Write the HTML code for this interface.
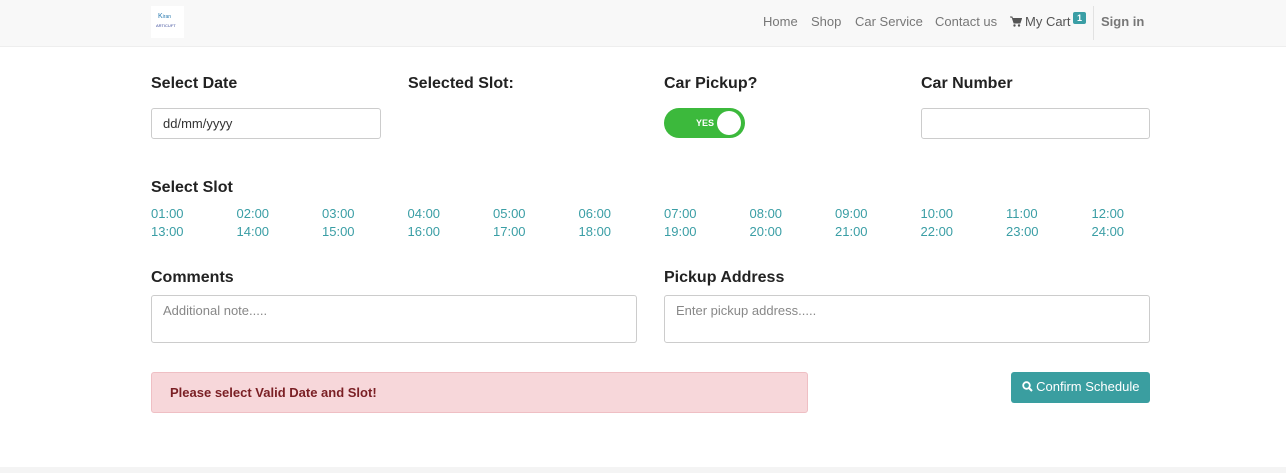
<!DOCTYPE html>
<html><head><style>
body{margin:0;width:1286px;height:473px;background:#fff;font-family:"Liberation Sans",sans-serif;position:relative;overflow:hidden;color:#333}
.nav{position:absolute;left:0;top:0;width:1286px;height:46px;background:#f8f8f8;border-bottom:1px solid #eee}
.logo{position:absolute;left:151px;top:6px;width:33px;height:32px;background:#fff}
.nav a{position:absolute;top:14px;font-size:13px;color:#777;text-decoration:none}
.h{position:absolute;font-size:16px;font-weight:bold;color:#222}
.in{position:absolute;border:1px solid #ccc;border-radius:3px;box-sizing:border-box;font-size:13px;color:#555;padding:7px 11px;background:#fff}
.s{position:absolute;font-size:13px;color:#3a9ea5}
</style></head><body>
<div class="nav">
<div class="logo"><div style="position:absolute;left:7px;top:7px;font-size:7px;color:#2a7ab0">K<span style="font-size:5px">iran</span></div><div style="position:absolute;left:5px;top:17px;font-size:4px;color:#3a4a9a">ARTICUFT</div></div>
<a style="left:763px">Home</a><a style="left:811px">Shop</a><a style="left:855px">Car Service</a><a style="left:935px">Contact us</a>
<svg style="position:absolute;left:1010px;top:16px" width="12" height="11" viewBox="0 0 12 11"><path d="M0 1h2l2 6h6l1.5-4.5H3" fill="#555" stroke="#555" stroke-width="1"/><circle cx="4.5" cy="9.5" r="1.2" fill="#555"/><circle cx="9" cy="9.5" r="1.2" fill="#555"/></svg>
<a style="left:1025px;color:#555">My Cart</a>
<span style="position:absolute;left:1073px;top:12px;background:#3a9ea5;color:#fff;font-size:9px;font-weight:bold;padding:1px 4px;border-radius:2px">1</span>
<div style="position:absolute;left:1093px;top:6px;width:1px;height:34px;background:#e2e2e2"></div>
<a style="left:1101px;font-weight:bold">Sign in</a>
</div>
<div class="h" style="left:151px;top:75px">Select Date</div>
<div class="h" style="left:408px;top:75px">Selected Slot:</div>
<div class="h" style="left:664px;top:75px">Car Pickup?</div>
<div class="h" style="left:921px;top:75px">Car Number</div>
<div class="in" style="left:151px;top:108px;width:230px;height:31px;color:#333">dd/mm/yyyy</div>
<div style="position:absolute;left:664px;top:108px;width:81px;height:30px;border-radius:15px;background:#3cb93c"><span style="position:absolute;left:32px;top:10px;font-size:9px;font-weight:bold;color:#fff">YES</span><div style="position:absolute;left:53px;top:3px;width:24px;height:24px;border-radius:50%;background:#fff"></div></div>
<div class="in" style="left:921px;top:108px;width:229px;height:31px"></div>
<div class="h" style="left:151px;top:179px">Select Slot</div>
<div class="s" style="left:151px;top:205px;width:1000px;line-height:18px">
<div style="display:grid;grid-template-columns:repeat(12,85.5px)">
<span>01:00</span><span>02:00</span><span>03:00</span><span>04:00</span><span>05:00</span><span>06:00</span><span>07:00</span><span>08:00</span><span>09:00</span><span>10:00</span><span>11:00</span><span>12:00</span>
<span>13:00</span><span>14:00</span><span>15:00</span><span>16:00</span><span>17:00</span><span>18:00</span><span>19:00</span><span>20:00</span><span>21:00</span><span>22:00</span><span>23:00</span><span>24:00</span></div></div>
<div class="h" style="left:151px;top:269px">Comments</div>
<div class="h" style="left:664px;top:269px">Pickup Address</div>
<div class="in" style="left:151px;top:295px;width:486px;height:48px;color:#888">Additional note.....</div>
<div class="in" style="left:664px;top:295px;width:486px;height:48px;color:#888">Enter pickup address.....</div>
<div style="position:absolute;left:151px;top:372px;width:657px;height:41px;box-sizing:border-box;background:#f7d7da;border:1px solid #efbfc4;border-radius:3px;color:#7a1f24;font-size:13px;font-weight:bold;padding:12px 18px">Please select Valid Date and Slot!</div>
<div style="position:absolute;left:1011px;top:372px;width:139px;height:31px;background:#3a9ea0;border-radius:3px;color:#fff;font-size:13px;line-height:30px;text-align:center"><svg width="11" height="11" viewBox="0 0 11 11" style="vertical-align:-1px"><circle cx="4.5" cy="4.5" r="3.3" fill="none" stroke="#fff" stroke-width="1.8"/><path d="M7 7l3 3" stroke="#fff" stroke-width="2"/></svg> Confirm Schedule</div>
<div style="position:absolute;left:0;top:467px;width:1286px;height:6px;background:#f4f4f4"></div>
</body></html>
